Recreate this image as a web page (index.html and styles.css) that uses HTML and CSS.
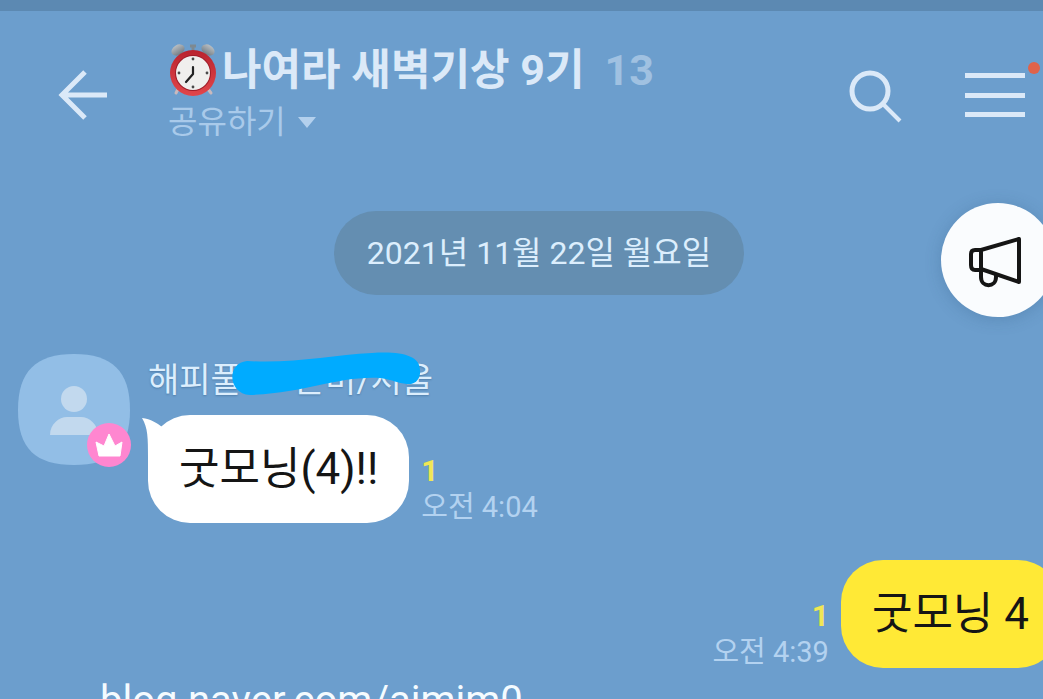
FILE: index.html
```
<!DOCTYPE html>
<html lang="ko">
<head>
  <meta charset="UTF-8" />
  <meta name="viewport" content="width=device-width, initial-scale=1.0"/>
  <title>나여라 새벽기상 9기</title>
  <link rel="stylesheet" href="styles.css">
</head>
<body>

  <div class="status-bar"></div>

  <header class="header">
    <button class="icon-btn" aria-label="뒤로">
      <svg width="50" height="50" viewBox="0 0 50 50" fill="none" stroke="#dbe9f8" stroke-width="5">
        <path d="M27 2L4 25L27 48M3 25H49"/>
      </svg>
    </button>

    <div class="room">
      <h1 class="room-title">
        <svg class="clock" width="50" height="54" viewBox="0 0 50 54">
          <defs>
            <linearGradient id="bell" x1="0" y1="0" x2="0" y2="1">
              <stop offset="0" stop-color="#b9bec2"/>
              <stop offset="1" stop-color="#727c84"/>
            </linearGradient>
            <linearGradient id="rim" x1="0" y1="0" x2="0" y2="1">
              <stop offset="0" stop-color="#b9232e"/>
              <stop offset="1" stop-color="#e2464b"/>
            </linearGradient>
          </defs>
          <path d="M10 46L8 50M40 46L43 50" stroke="#c9b9bd" stroke-width="3" stroke-linecap="round"/>
          <path d="M22 3h6M25 3v6" stroke="#7d8991" stroke-width="3"/>
          <ellipse cx="10" cy="7" rx="7" ry="5" transform="rotate(-32 10 7)" fill="url(#bell)"/>
          <ellipse cx="40" cy="7" rx="7" ry="5" transform="rotate(32 40 7)" fill="url(#bell)"/>
          <circle cx="25" cy="30" r="23" fill="url(#rim)"/>
          <circle cx="25" cy="30" r="18" fill="#9f1d29"/>
          <circle cx="25" cy="30" r="17" fill="#f0efed"/>
          <g fill="#494949">
            <circle cx="25" cy="16" r="1.4"/>
            <circle cx="39" cy="30" r="1.4"/>
            <circle cx="25" cy="44" r="1.4"/>
            <circle cx="11" cy="30" r="1.4"/>
          </g>
          <path d="M25 24V31L18 39" fill="none" stroke="#222" stroke-width="2.2" stroke-linecap="round" stroke-linejoin="round"/>
        </svg>
        <span>나여라 새벽기상 9기</span>
        <span class="count">13</span>
      </h1>
      <button class="share">
        공유하기
        <svg width="18" height="11" viewBox="0 0 18 11"><path d="M0 0H18L9 11Z" fill="#b3d0ed"/></svg>
      </button>
    </div>

    <button class="icon-btn search" aria-label="검색">
      <svg width="54" height="54" viewBox="0 0 54 54" fill="none" stroke="#dbe9f8" stroke-width="5">
        <circle cx="21" cy="21" r="18"/>
        <path d="M34 34L51 51" stroke-width="4"/>
      </svg>
    </button>
    <button class="icon-btn menu" aria-label="메뉴">
      <svg width="60" height="44" viewBox="0 0 60 44" stroke="#dbe9f8" stroke-width="5">
        <path d="M0 2.5H60M0 22.5H60M0 41.5H60"/>
      </svg>
      <span class="dot"></span>
    </button>
  </header>

  <main class="chat">
    <button class="notice" aria-label="공지">
      <svg width="54" height="52" viewBox="0 0 54 52" fill="none" stroke="#151515" stroke-width="4" stroke-linejoin="round" stroke-linecap="round">
        <path d="M14 14L52 3V46L14 33Z"/>
        <path d="M14 14H8C5 14 4 16 4 18V29C4 32 5 34 8 34H14"/>
        <path d="M14 34V41C14 52 29 52 29 41V39"/>
      </svg>
    </button>

    <div class="date">2021년 11월 22일 월요일</div>

    <div class="row">
      <div class="avatar">
        <svg width="112" height="112" viewBox="0 0 112 112">
          <path d="M56 1C94 1 112 18 112 57S94 112 56 112S0 96 0 57S18 1 56 1Z" fill="#92bee6"/>
          <circle cx="56" cy="46" r="13" fill="#c2d9ee"/>
          <path d="M32 82C32 71 41 64 49 64H63C71 64 80 71 80 82Z" fill="#c2d9ee"/>
        </svg>
        <svg class="crown" width="44" height="44" viewBox="0 0 44 44">
          <circle cx="22" cy="22" r="22" fill="#ff86d0"/>
          <path d="M9 19L17 23L22 11L28 23L35 19L33 33H12Z" fill="#fff" stroke="#fff" stroke-width="1" stroke-linejoin="round"/>
        </svg>
      </div>
      <div class="body">
        <div class="name">
          <span>해피풀</span><span class="hidden-part"></span><span>은미/서울</span>
          <svg class="marker" width="190" height="44" viewBox="0 0 190 44">
            <path d="M15 9C60 12 100 3 140 1C170 -1 188 4 188 18C189 27 183 33 175 32C165 31 162 28 148 26C105 24 75 41 18 43C-4 42 -6 11 15 9Z" fill="#00abff"/>
          </svg>
        </div>
        <div class="line">
          <div class="bubble">
            <svg class="tail" width="22" height="40" viewBox="0 0 22 40"><path d="M0 0C9 1 15 5 20 9L22 30L6 40C6 20 6 10 0 0Z" fill="#fff"/></svg>
            굿모닝(4)!!
          </div>
          <div class="meta">
            <span class="unread">1</span>
            <time>오전 4:04</time>
          </div>
        </div>
      </div>
    </div>

    <div class="line mine">
      <div class="meta">
        <span class="unread">1</span>
        <time>오전 4:39</time>
      </div>
      <div class="bubble">굿모닝 4</div>
    </div>

    <p class="watermark">blog.naver.com/aimim0</p>
  </main>

</body>
</html>
```
FILE: styles.css
```
* {
  margin: 0;
  padding: 0;
  box-sizing: border-box;
}

body {
  height: 100vh;
  overflow: hidden;
  font-family: Roboto, "Noto Sans CJK KR", sans-serif;
  background: #6c9ecd;
  color: #dceefd;
}

svg {
  display: block;
  flex-shrink: 0;
}

button {
  background: none;
  border: none;
  font: inherit;
  color: inherit;
  cursor: pointer;
}

.status-bar {
  height: 11px;
  background: #5c89b2;
}

.header {
  display: flex;
  align-items: flex-start;
  padding: 31px 18px 0 58px;
}

.icon-btn {
  position: relative;
  margin-top: 28px;
}

.room {
  flex: 1;
  margin-left: 60px;
}

.room-title {
  display: flex;
  align-items: center;
  font-size: 43px;
  line-height: 56px;
  font-weight: 700;
  color: #dbe9f8;
  white-space: nowrap;
}

.clock {
  margin-right: 4px;
}

.count {
  margin-left: 20px;
  color: #a0c1e1;
}

.share {
  display: flex;
  align-items: center;
  gap: 12px;
  font-size: 32px;
  line-height: 48px;
  color: #a9caea;
}

.menu {
  margin: 31px 0 0 62px;
}

/* new activity dot */
.dot {
  position: absolute;
  top: -11px;
  right: -15px;
  width: 12px;
  height: 12px;
  border-radius: 50%;
  background: #e0634a;
}

/* the chat area runs a little past the right edge */
.chat {
  position: relative;
  margin-right: -32px;
  padding: 65px 15px 0 18px;
}

.notice {
  position: absolute;
  top: 57px;
  right: 20px;
  width: 114px;
  height: 114px;
  padding: 4px 0 0 26px;
  border-radius: 50%;
  background: #fafcfe;
  box-shadow: 0 2px 16px rgba(40, 80, 120, 0.25);
}

.date {
  width: fit-content;
  margin: 0 auto 58px;
  padding: 18px 33px;
  border-radius: 42px;
  font-size: 32px;
  line-height: 48px;
  background: #648eb1;
}

.row {
  display: flex;
  align-items: flex-start;
  gap: 18px;
}

.avatar {
  position: relative;
}

.crown {
  position: absolute;
  right: -1px;
  bottom: -2px;
}

.name {
  position: relative;
  display: flex;
  width: fit-content;
  margin: 3px 0 11px;
  font-size: 34px;
  line-height: 48px;
  text-shadow: 0 1px 2px rgba(40, 80, 120, 0.4);
}

.hidden-part {
  width: 52px;
}

.marker {
  position: absolute;
  top: -4px;
  left: 84px;
}

.line {
  display: flex;
  align-items: flex-end;
  gap: 12px;
}

.bubble {
  position: relative;
  padding: 22px 31px;
  border-radius: 42px;
  font-size: 44px;
  line-height: 64px;
  color: #151515;
  background: #fff;
}

.tail {
  position: absolute;
  top: 3px;
  left: -6px;
}

.meta {
  display: flex;
  flex-direction: column;
  font-size: 29px;
  line-height: 32px;
  color: #b3d2f0;
}

.unread {
  font-size: 30px;
  line-height: 40px;
  font-weight: 700;
  color: #f0e754;
}

.mine {
  justify-content: flex-end;
  margin-top: 37px;
}

.mine .unread {
  text-align: right;
}

.mine .bubble {
  background: #ffe936;
}

.watermark {
  padding: 5px 0 0 82px;
  font-size: 40px;
  line-height: 56px;
  color: #f4fbff;
}
```
